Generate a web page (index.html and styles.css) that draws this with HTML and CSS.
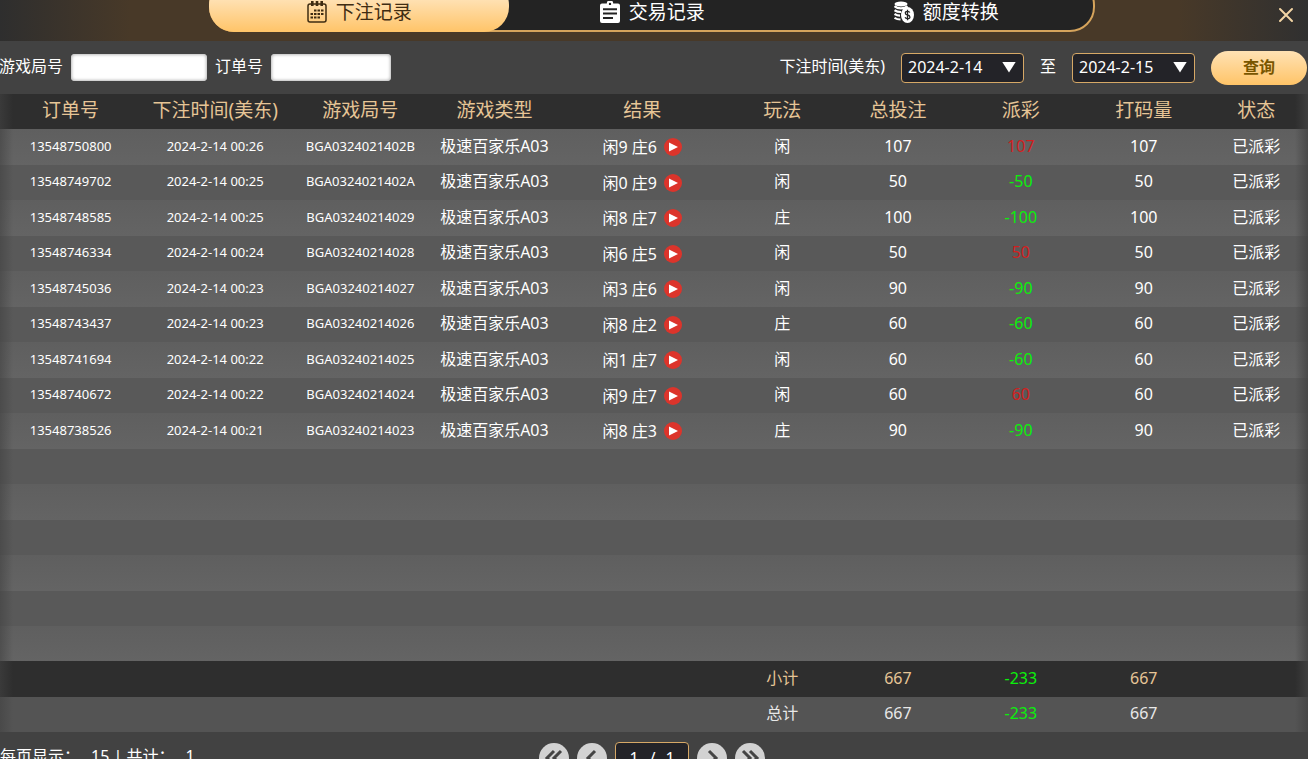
FILE: index.html
```html
<!DOCTYPE html>
<html lang="zh-CN">
<head>
    <meta charset="UTF-8">
    <meta name="viewport" content="width=device-width, initial-scale=1.0">
    <title>下注记录</title>
    <link rel="stylesheet" href="styles.css">
</head>
<body>
    <!-- Tabs -->
    <header class="top-bar">
        <nav class="tabs">
            <a class="tab active" href="#bets">
                <svg class="tab-icon" viewBox="0 0 20 22">
                    <rect x="1" y="3" width="18" height="18" rx="2" fill="none" stroke="currentColor" stroke-width="1.5"/>
                    <path d="M4 0h2.600v5H4zM8.700 0h2.600v5H8.700zM13.400 0H16v5h-2.600z" fill="currentColor"/>
                    <path d="M7 8.500h2.500v2H7zM10.500 8.500H13v2h-2.500zM14 8.500h2.500v2H14zM3.500 12H6v2H3.500zM7 12h2.500v2H7zM10.500 12H13v2h-2.500zM14 12h2.500v2H14zM3.500 15.500H6v2H3.500zM7 15.500h2.500v2H7zM10.500 15.500H13v2h-2.500z" fill="currentColor"/>
                </svg>
                下注记录
            </a>
            <a class="tab" href="#trades">
                <svg class="tab-icon" viewBox="0 0 20 22">
                    <path fill="currentColor" fill-rule="evenodd" d="M2 2.500H6.800A3.200 3.200 0 0 1 13.200 2.500H18a2 2 0 0 1 2 2V20a2 2 0 0 1-2 2H2a2 2 0 0 1-2-2V4.500a2 2 0 0 1 2-2zM10 1.700a1.200 1.200 0 1 0 0 2.400a1.200 1.200 0 0 0 0-2.400zM3 7.200v2h14v-2zM3 11.600v2h14v-2zM3 16v2h10v-2z"/>
                </svg>
                交易记录
            </a>
            <a class="tab" href="#transfer">
                <svg class="tab-icon" viewBox="0 0 20 22">
                    <ellipse cx="7" cy="3" rx="6.500" ry="2.600" fill="currentColor"/>
                    <path d="M.5 5.200Q3 7.300 7 7.300T13.500 5.200M.5 9.200Q3 11 7 11M.5 13Q3 14.700 6 14.700M.5 16.800Q3 18.500 6.500 18.500" fill="none" stroke="currentColor" stroke-width="2.200"/>
                    <ellipse cx="13.500" cy="14" rx="6.500" ry="8" fill="currentColor"/>
                    <path d="M15.800 11.500Q15.200 10.300 13.500 10.300Q11.300 10.300 11.300 12T13.500 14T15.900 16T13.500 17.700Q11.600 17.700 11.100 16.300M13.500 8.800v10.500" fill="none" stroke="#232323" stroke-width="1.300"/>
                </svg>
                额度转换
            </a>
        </nav>
        <button class="close" aria-label="关闭">
            <svg viewBox="0 0 16 16"><path d="M2 2l12 12M14 2L2 14" stroke="currentColor" stroke-width="2" stroke-linecap="round"/></svg>
        </button>
    </header>

    <!-- Search -->
    <form class="filters">
        <label for="round">游戏局号</label>
        <input class="text-box wide" id="round" type="text">
        <label for="order">订单号</label>
        <input class="text-box" id="order" type="text">
        <div class="dates">
            <label for="from">下注时间(美东)</label>
            <span class="date-box"><select id="from"><option>2024-2-14</option></select></span>
            <label for="to">至</label>
            <span class="date-box"><select id="to"><option>2024-2-15</option></select></span>
            <button class="search" type="button">查询</button>
        </div>
    </form>

    <svg width="0" height="0" class="sprite">
        <symbol id="play" viewBox="0 0 18 18">
            <circle cx="9" cy="9" r="9" fill="#dc342b"/>
            <path d="M5 4.500v9L14 9z" fill="#fff"/>
        </symbol>
    </svg>

    <!-- Records -->
    <div class="records">
        <table>
            <colgroup>
                <col class="c-order"><col class="c-time"><col class="c-round"><col class="c-type"><col class="c-result">
                <col class="c-play"><col class="c-total"><col class="c-payout"><col class="c-turnover"><col class="c-status">
            </colgroup>
            <thead>
                <tr><th>订单号</th><th>下注时间(美东)</th><th>游戏局号</th><th>游戏类型</th><th>结果</th><th>玩法</th><th>总投注</th><th>派彩</th><th>打码量</th><th>状态</th></tr>
            </thead>
            <tbody>
                <tr><td class="small">13548750800</td><td class="small">2024-2-14 00:26</td><td class="small">BGA0324021402B</td><td>极速百家乐A03</td><td class="result-cell"><div class="result">闲9 庄6<button class="play" aria-label="播放"><svg><use href="#play"/></svg></button></div></td><td>闲</td><td>107</td><td class="win">107</td><td>107</td><td>已派彩</td></tr>
                <tr><td class="small">13548749702</td><td class="small">2024-2-14 00:25</td><td class="small">BGA0324021402A</td><td>极速百家乐A03</td><td class="result-cell"><div class="result">闲0 庄9<button class="play" aria-label="播放"><svg><use href="#play"/></svg></button></div></td><td>闲</td><td>50</td><td class="loss">-50</td><td>50</td><td>已派彩</td></tr>
                <tr><td class="small">13548748585</td><td class="small">2024-2-14 00:25</td><td class="small">BGA03240214029</td><td>极速百家乐A03</td><td class="result-cell"><div class="result">闲8 庄7<button class="play" aria-label="播放"><svg><use href="#play"/></svg></button></div></td><td>庄</td><td>100</td><td class="loss">-100</td><td>100</td><td>已派彩</td></tr>
                <tr><td class="small">13548746334</td><td class="small">2024-2-14 00:24</td><td class="small">BGA03240214028</td><td>极速百家乐A03</td><td class="result-cell"><div class="result">闲6 庄5<button class="play" aria-label="播放"><svg><use href="#play"/></svg></button></div></td><td>闲</td><td>50</td><td class="win">50</td><td>50</td><td>已派彩</td></tr>
                <tr><td class="small">13548745036</td><td class="small">2024-2-14 00:23</td><td class="small">BGA03240214027</td><td>极速百家乐A03</td><td class="result-cell"><div class="result">闲3 庄6<button class="play" aria-label="播放"><svg><use href="#play"/></svg></button></div></td><td>闲</td><td>90</td><td class="loss">-90</td><td>90</td><td>已派彩</td></tr>
                <tr><td class="small">13548743437</td><td class="small">2024-2-14 00:23</td><td class="small">BGA03240214026</td><td>极速百家乐A03</td><td class="result-cell"><div class="result">闲8 庄2<button class="play" aria-label="播放"><svg><use href="#play"/></svg></button></div></td><td>庄</td><td>60</td><td class="loss">-60</td><td>60</td><td>已派彩</td></tr>
                <tr><td class="small">13548741694</td><td class="small">2024-2-14 00:22</td><td class="small">BGA03240214025</td><td>极速百家乐A03</td><td class="result-cell"><div class="result">闲1 庄7<button class="play" aria-label="播放"><svg><use href="#play"/></svg></button></div></td><td>闲</td><td>60</td><td class="loss">-60</td><td>60</td><td>已派彩</td></tr>
                <tr><td class="small">13548740672</td><td class="small">2024-2-14 00:22</td><td class="small">BGA03240214024</td><td>极速百家乐A03</td><td class="result-cell"><div class="result">闲9 庄7<button class="play" aria-label="播放"><svg><use href="#play"/></svg></button></div></td><td>闲</td><td>60</td><td class="win">60</td><td>60</td><td>已派彩</td></tr>
                <tr><td class="small">13548738526</td><td class="small">2024-2-14 00:21</td><td class="small">BGA03240214023</td><td>极速百家乐A03</td><td class="result-cell"><div class="result">闲8 庄3<button class="play" aria-label="播放"><svg><use href="#play"/></svg></button></div></td><td>庄</td><td>90</td><td class="loss">-90</td><td>90</td><td>已派彩</td></tr>
                <tr><td colspan="10"></td></tr>
                <tr><td colspan="10"></td></tr>
                <tr><td colspan="10"></td></tr>
                <tr><td colspan="10"></td></tr>
                <tr><td colspan="10"></td></tr>
                <tr><td colspan="10"></td></tr>
            </tbody>
            <tfoot>
                <tr class="subtotal"><td colspan="5"></td><td>小计</td><td>667</td><td class="loss">-233</td><td>667</td><td></td></tr>
                <tr class="total"><td colspan="5"></td><td>总计</td><td>667</td><td class="loss">-233</td><td>667</td><td></td></tr>
            </tfoot>
        </table>
    </div>

    <!-- Paging -->
    <footer class="bottom-bar">
        <div class="page-info"><span>每页显示：</span><span>15 | 共计：</span><span>1</span></div>
        <div class="pager">
            <button aria-label="首页"><svg viewBox="0 0 30 30"><path d="M15 8l-7 7 7 7M22 8l-7 7 7 7"/></svg></button>
            <button aria-label="上一页"><svg viewBox="0 0 30 30"><path d="M18 8l-7 7 7 7"/></svg></button>
            <label class="page-box"><input type="text" value="1" aria-label="页码"><span>/</span><span>1</span></label>
            <button aria-label="下一页"><svg viewBox="0 0 30 30"><path d="M12 8l7 7-7 7"/></svg></button>
            <button aria-label="末页"><svg viewBox="0 0 30 30"><path d="M8 8l7 7-7 7M15 8l7 7-7 7"/></svg></button>
        </div>
    </footer>
</body>
</html>
```

FILE: styles.css
```css
* {
    box-sizing: border-box;
}
body, html {
    margin: 0;
    padding: 0;
    height: 100%;
    overflow: hidden;
}
body {
    background: #424242;
    color: #fff;
    font-family: "Noto Sans", "Noto Sans CJK SC", sans-serif;
    font-size: 16px;
    line-height: 24px;
}
button, input, select {
    font: inherit;
    color: inherit;
    margin: 0;
    padding: 0;
    border: none;
    background: none;
}
button {
    cursor: pointer;
}
.sprite {
    position: absolute;
}

/* top bar, the tab strip runs off the upper edge */
.top-bar {
    display: flex;
    height: 41px;
    padding: 0 14px 0 16%;
    background: linear-gradient(90deg, #2e2e2e 0, #483928 130px, #483928 calc(100% - 130px), #303030 100%);
}
.tabs {
    display: flex;
    width: 886px;
    height: 52px;
    margin-top: -20px;
    border: 2px solid #d6a45c;
    border-radius: 25px;
    background: #232323;
}
.tab {
    flex: 1;
    display: flex;
    align-items: center;
    justify-content: center;
    gap: 9px;
    padding-top: 11px;
    color: #fff;
    font-size: 19px;
    text-decoration: none;
}
.tab.active {
    flex: 0 0 300px;
    margin: -2px -4px -2px -2px;
    border-radius: 25px;
    background: linear-gradient(#ffe9c8 20%, #ffc468);
    color: #3f2c12;
}
.tab-icon {
    width: 20px;
    height: 22px;
}
.close {
    width: 16px;
    height: 16px;
    margin: 7px 0 0 auto;
    color: #f3d5a4;
}
.close svg {
    display: block;
}

/* search form */
.filters {
    display: flex;
    align-items: center;
    gap: 8px;
    height: 53px;
    margin-left: -1px;
    white-space: nowrap;
}
.filters label {
    padding-bottom: 4px;
}
.text-box {
    width: 120px;
    height: 27px;
    padding: 0 6px;
    border-radius: 4px;
    background: #fff;
    box-shadow: inset 0 0 3px 1px #bbb;
    color: #333;
}
.text-box.wide {
    width: 136px;
}
.dates {
    display: flex;
    align-items: center;
    gap: 16px;
    margin-left: auto;
    padding-right: 1px;
}
.date-box {
    position: relative;
}
.date-box select {
    display: block;
    width: 123px;
    height: 30px;
    padding: 0 6px 2px;
    border: 1px solid #d6a866;
    border-radius: 4px;
    background: #232328;
    appearance: none;
}
.date-box::after {
    content: "";
    position: absolute;
    top: 9px;
    right: 8px;
    width: 14px;
    height: 11px;
    background: #fff;
    clip-path: polygon(0 0, 100% 0, 50% 100%);
    pointer-events: none;
}
.search {
    width: 96px;
    height: 34px;
    padding-bottom: 2px;
    border-radius: 17px;
    background: linear-gradient(#ffe2b4, #ffc468);
    color: #795600;
    font-weight: bold;
}

/* records table */
.records {
    position: relative;
}
.records::after {
    content: "";
    position: absolute;
    inset: 0;
    background: linear-gradient(90deg, rgba(66,66,66,0.6) 0, rgba(66,66,66,0) 13px, rgba(66,66,66,0) calc(100% - 13px), rgba(66,66,66,0.8) 100%);
    pointer-events: none;
}
table {
    width: 100%;
    table-layout: fixed;
    border-collapse: collapse;
}
.c-order { width: 10.8%; }
.c-time { width: 11.3%; }
.c-round { width: 10.9%; }
.c-type { width: 9.6%; }
.c-result { width: 13%; }
.c-play { width: 8.4%; }
.c-total { width: 9.3%; }
.c-payout { width: 9.5%; }
.c-turnover { width: 9.3%; }
.c-status { width: 7.9%; }
th, td {
    padding: 0 0 3px;
    text-align: center;
    white-space: nowrap;
}
.result-cell {
    padding: 0;
}
thead tr {
    height: 35px;
    background: #2e2e2e;
}
th {
    color: #e6c596;
    font-size: 19px;
    font-weight: normal;
}
tbody tr {
    height: 36px;
    background: linear-gradient(#5f5f5f, #646464);
}
tbody tr:nth-child(even) {
    height: 35px;
    background: #595959;
}
tbody tr:last-child {
    height: 35px;
}
.small {
    font-size: 13px;
}
.result {
    display: flex;
    align-items: center;
    justify-content: center;
    gap: 7px;
}
.play {
    width: 18px;
    height: 18px;
}
.play svg {
    display: block;
    width: 18px;
    height: 18px;
}
.win {
    color: #d21e1e;
}
.subtotal {
    height: 36px;
    background: #2e2e2e;
    color: #e6c596;
}
.total {
    height: 35px;
    background: #545454;
    color: #e8e8e8;
}
td.loss {
    color: #0bf00b;
}

/* paging */
.bottom-bar {
    display: grid;
    grid-template-columns: 1fr auto 1fr;
    align-items: center;
    height: 52px;
    padding-right: 4px;
    white-space: nowrap;
}
.page-info {
    display: flex;
    gap: 11px;
    padding-bottom: 4px;
}
.pager {
    display: flex;
    align-items: center;
    gap: 8px;
}
.pager button {
    width: 30px;
    height: 30px;
    border-radius: 50%;
    background: #d2d2d2;
}
.pager svg {
    display: block;
    fill: none;
    stroke: #444;
    stroke-width: 3;
}
.page-box {
    display: flex;
    align-items: center;
    justify-content: center;
    gap: 10px;
    width: 74px;
    height: 32px;
    border: 1px solid #d6a866;
    border-radius: 4px;
    background: #232328;
}
.page-box input {
    width: 10px;
}
```
